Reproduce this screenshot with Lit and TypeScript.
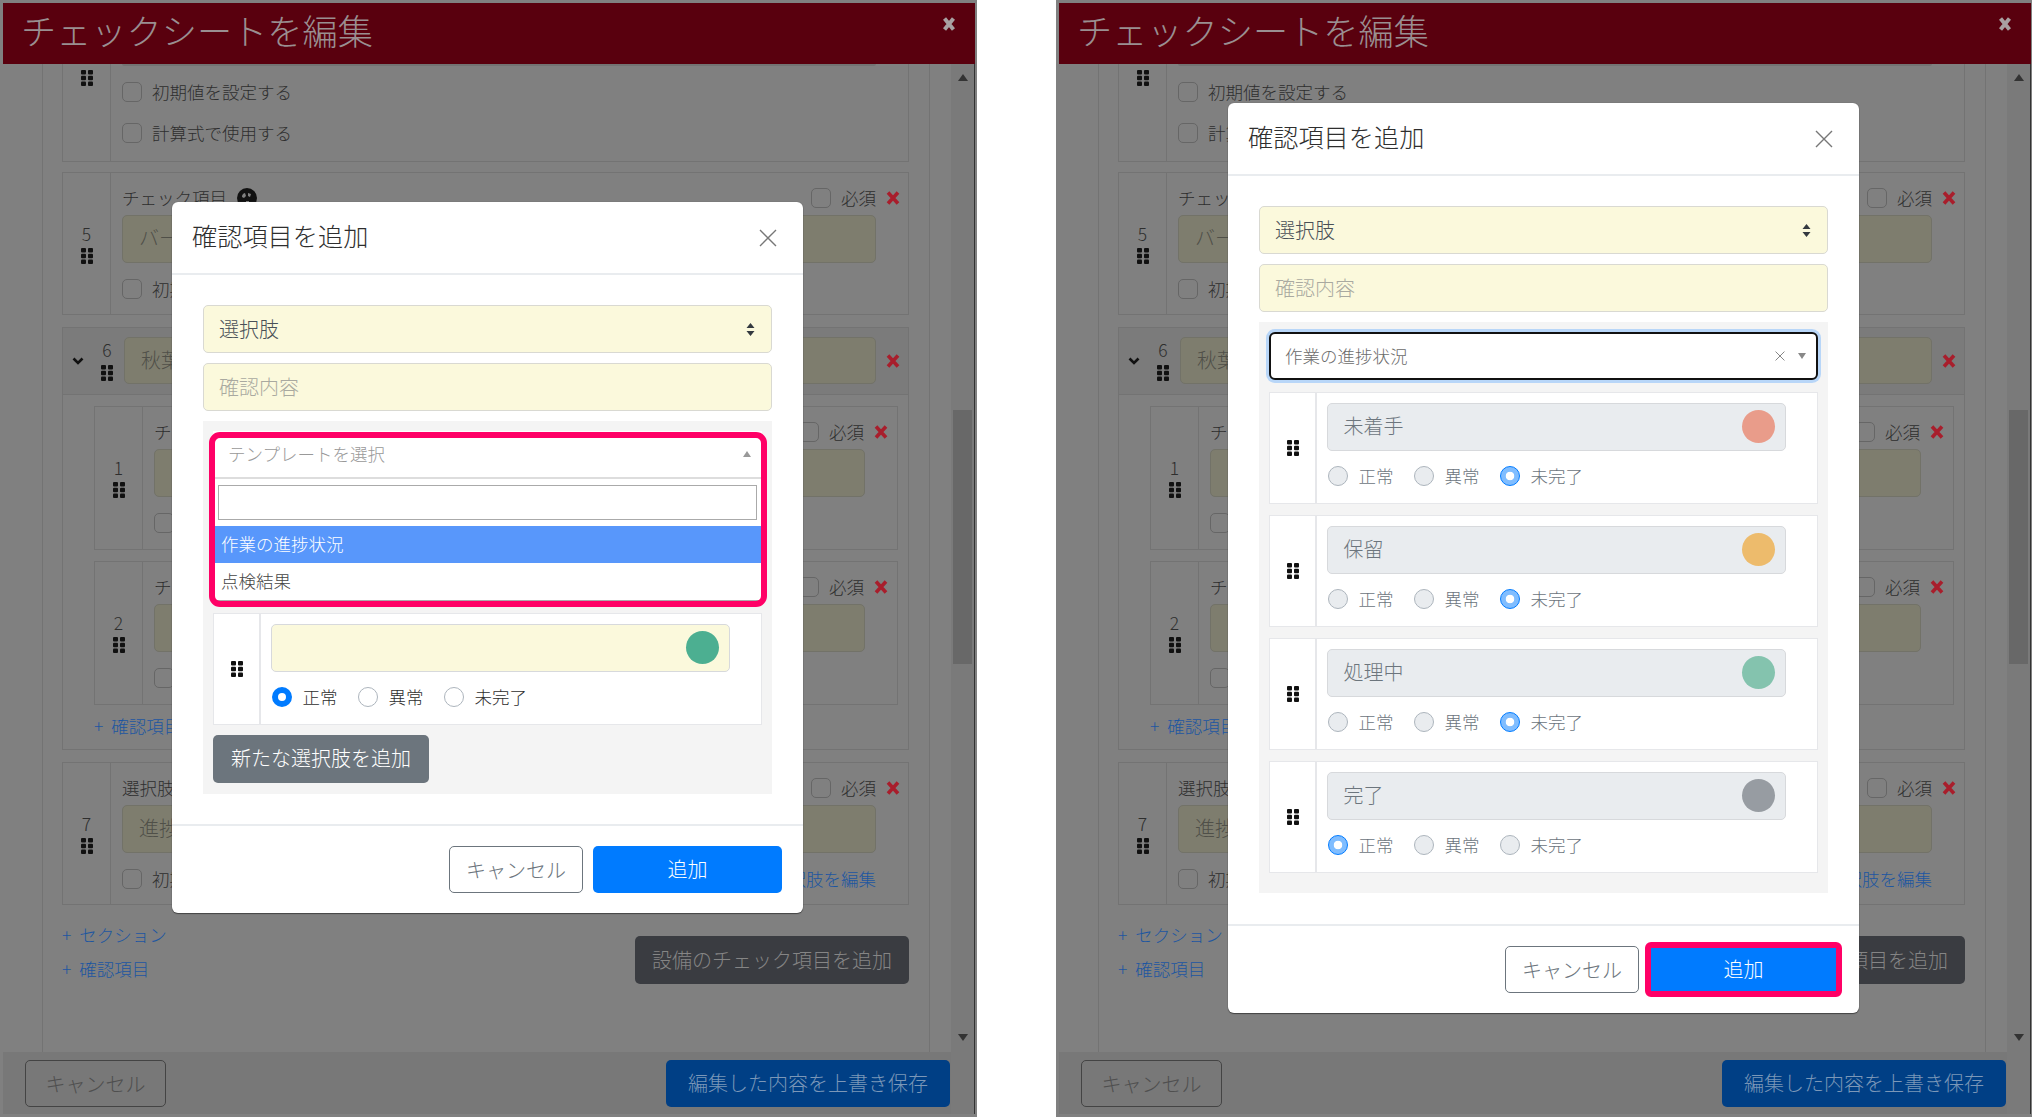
import { LitElement, html, css, nothing, svg } from "lit";
import { customElement } from "lit/decorators.js";

const grip = (cls = "grip") => html`<svg class=${cls} viewBox="0 0 12 16" width="12" height="16">
  ${[0, 1, 2].map((r) => [0, 1].map((c) => svg`<rect x=${c * 7} y=${r * 5.7} width="5" height="4.6" rx="1"></rect>`))}
</svg>`;
const redX = () => html`<svg class="xm" viewBox="0 0 14 14" width="14" height="14"><path d="M2 1.5 12 12.500M12 1.5 2 12.500"></path></svg>`;
const chk = () => html`<span class="chk"></span>`;
const thinX = (s: number, cls: string) => html`<svg class=${cls} viewBox="0 0 18 18" width=${s} height=${s}><path d="M1 1 17 17M17 1 1 17"></path></svg>`;

interface Choice { text: string; color: string; checked: number; disabled: boolean }

@customElement("app-root")
export class AppRoot extends LitElement {
  static styles = css`
    :host { display: block; width: 2032px; height: 1118px; background: #fff; overflow: hidden; font-family: "Noto Sans CJK JP", "Liberation Sans", sans-serif; font-size: 17.5px; font-weight: 300; color: #2e2e2e; }
    * { box-sizing: border-box; }
    .page { display: flex; gap: 79px; width: 2032px; height: 1118px; }
    .panel { position: relative; flex: none; width: 977px; height: 1117px; background: #808080; padding: 3px 0 3px 3px; display: flex; flex-direction: column; overflow: hidden; }
    .panel.second { width: 976px; }
    .hdr { flex: none; width: 972px; height: 61px; background: #59000e; color: #9a8f91; font-size: 35.2px; line-height: 54px; padding-left: 18px; position: relative; }
    .hdr svg { position: absolute; right: 20px; top: 14px; stroke: #a8a0a1; stroke-width: 4; fill: none; }
    .under { flex: 1; display: flex; min-height: 0; }
    .main { width: 948px; display: flex; flex-direction: column; }
    .track { width: 24px; background: #7a7a7a; border-right: 1px solid #333; display: flex; flex-direction: column; align-items: center; position: relative; }
    .thumb { position: absolute; top: 346px; left: 2px; width: 19px; height: 254px; background: #686868; }
    .tri-up { width: 0; height: 0; border: 5px solid transparent; border-top: 0; border-bottom: 7px solid #333; margin-top: 10px; }
    .tri-dn { width: 0; height: 0; border: 5px solid transparent; border-bottom: 0; border-top: 7px solid #333; position: absolute; top: 970px; }
    .scroll { height: 988px; overflow: hidden; }
    .content { margin-left: 39px; width: 888px; height: 988px; border-left: 1px solid #737373; border-right: 1px solid #737373; padding: 0 20px 0 19px; display: flex; flex-direction: column; }
    .row { flex: none; border: 1px solid #737373; display: flex; }
    .r0 { height: 98px; border-top: 0; }
    .mt10 { margin-top: 10px; }
    .mt12 { margin-top: 12px; }
    .handle { flex: none; width: 48px; border-right: 1px solid #737373; display: flex; flex-direction: column; align-items: center; justify-content: center; gap: 4px; line-height: 20px; color: #2e2e2e; }
    .r0 .handle { justify-content: flex-start; padding-top: 6px; }
    .grip { fill: #111; display: block; }
    .cell { flex: 1; min-width: 0; padding: 15px 32px 15px 11px; }
    .r0 .cell { padding: 0 32px 0 11px; }
    .stub { height: 2px; background: #737373; border-radius: 0 0 5px 5px; margin-bottom: 16px; }
    .head { display: flex; align-items: center; height: 20px; margin: 0 -24px 7px 0; gap: 10px; line-height: 20px; }
    .nest .head { margin-right: -23px; }
    .head .lbl { flex: 1; display: flex; align-items: center; gap: 10px; white-space: nowrap; }
    .q { flex: none; }
    .xm { stroke: #a81e2c; stroke-width: 3.6; fill: none; flex: none; }
    .chk { flex: none; width: 20px; height: 20px; border: 1.5px solid #666; border-radius: 5px; background: #808080; display: block; }
    .bginput { height: 48px; background: #7e7d6e; border: 1.5px solid #727268; border-radius: 5px; padding-left: 16px; font-size: 20px; line-height: 44px; color: #4f4f48; white-space: nowrap; overflow: hidden; }
    .check { display: flex; align-items: center; gap: 10px; height: 20px; line-height: 20px; margin-top: 16px; white-space: nowrap; }
    .check .link { margin-left: auto; }
    .r0 .check { margin-top: 0; margin-bottom: 21px; }
    .link { color: #1d56a0; white-space: nowrap; line-height: 20px; word-spacing: 4px; }
    .section { flex-direction: column; margin-top: 12px; height: 423px; }
    .sec-head { flex: none; display: flex; align-items: center; height: 67px; padding: 9px 8px 10px 9px; background: #7b7b7b; border-bottom: 1px solid #737373; }
    .chev { fill: none; stroke: #111; stroke-width: 2.6; flex: none; }
    .sec-num { flex: none; width: 20px; margin: 0 7px 0 13px; display: flex; flex-direction: column; align-items: center; gap: 5px; line-height: 20px; }
    .sec-head .bginput { flex: 1; margin-right: 10px; height: 47px; }
    .nest { padding: 11px 10px 0 31px; display: flex; flex-direction: column; }
    .nest .row { height: 144px; }
    .nest .row + .row { margin-top: 11px; }
    .nest .link { margin-top: 11px; }
    .actions { flex: none; display: flex; justify-content: space-between; margin-top: 21px; }
    .links { display: flex; flex-direction: column; gap: 14px; margin-top: -1px; }
    .dark-btn { margin-top: 10px; height: 48px; width: 274px; background: #3a3c41; color: #858585; border-radius: 5px; font-size: 20px; line-height: 47px; text-align: center; white-space: nowrap; }
    .foot { flex: 1; background: #787878; padding: 8px 0 0 22px; display: flex; justify-content: space-between; align-items: flex-start; }
    .foot span { height: 47px; font-size: 20px; line-height: 45px; border-radius: 5px; text-align: center; white-space: nowrap; }
    .f-cancel { width: 141px; border: 1.5px solid #444; color: #4f4f4f; }
    .f-save { width: 284px; background: #003f85; color: #7b97b8; margin-right: 1px; }

    .modal { position: absolute; left: 172px; width: 631px; background: #fff; border-radius: 6px; box-shadow: 0 1px 1px #444, 0 0 1px #555; display: flex; flex-direction: column; }
    .modal.low { top: 202px; height: 711px; }
    .modal.high { top: 103px; height: 910px; }
    .m-head { flex: none; height: 73px; border-bottom: 2px solid #e9ecef; display: flex; align-items: center; justify-content: space-between; padding: 0 26px 0 20px; font-size: 25.2px; color: #2e2e2e; }
    .m-head span { padding-bottom: 5px; }
    .m-close { stroke: #777; stroke-width: 1.4; fill: none; }
    .m-body { flex: 1; padding: 30px 31px; }
    .y-select { position: relative; height: 48px; background: #fbf9dc; border: 1.5px solid #d9d9d2; border-radius: 5px; padding-left: 15px; font-size: 20px; line-height: 45px; color: #495057; }
    .y-select svg { position: absolute; right: 16px; top: 17px; fill: #343a40; }
    .y-input { height: 48px; margin-top: 10px; background: #fbf9dc; border: 1.5px solid #d9d9d2; border-radius: 5px; padding-left: 15px; font-size: 20px; line-height: 45px; color: #a9a9a0; }
    .tray { margin-top: 10px; background: #f4f4f4; padding: 10px 10px 11px 10px; }
    .tray.full { padding-bottom: 20px; }
    .open { position: relative; height: 170px; background: #fff; display: flex; flex-direction: column; border-bottom: 1.5px solid #aaa; }
    .open-top { flex: none; height: 48px; border-bottom: 2px solid #ddd; padding: 0 11px 0 15px; line-height: 46px; color: #999; display: flex; align-items: center; justify-content: space-between; }
    .tri-sm-up { width: 0; height: 0; border: 4px solid transparent; border-top: 0; border-bottom: 6px solid #999; }
    .search { flex: none; padding: 6px 5px; height: 47px; }
    .search div { height: 35px; border: 1.5px solid #aaa; background: #fff; }
    .opt { flex: none; height: 37px; padding-left: 8px; line-height: 35px; color: #444; }
    .opt.sel { background: #5897fb; color: #fff; }
    .pink { position: absolute; pointer-events: none; border: 6px solid #ff0066; border-radius: 11px; }
    .open .pink { top: 1px; left: -4px; right: -5px; bottom: -7px; }
    .focus { height: 48px; background: #fff; border: 2px solid #111; border-radius: 6px; box-shadow: 0 0 0 3px #b8d6f8; padding: 0 10px 0 14px; display: flex; align-items: center; color: #6b6b6b; }
    .focus .t { flex: 1; padding-bottom: 2px; }
    .sx { stroke: #777; stroke-width: 1.6; fill: none; margin-right: 13px; }
    .tri-sm-dn { width: 0; height: 0; border: 4px solid transparent; border-bottom: 0; border-top: 6px solid #888; }
    .choice { display: flex; height: 112px; margin-top: 11px; background: #fff; border: 1.5px solid #e6e7ea; }
    .open + .choice, .focus + .choice { margin-top: 12px; }
    .c-handle { flex: none; width: 47px; border-right: 2px solid #e6e7ea; display: flex; align-items: center; justify-content: center; }
    .c-cell { flex: 1; padding: 9.5px 0 0 9.5px; }
    .c-input { width: 459px; height: 48px; border: 1.5px solid #d7d9dc; border-radius: 5px; background: #fbf9dc; display: flex; align-items: center; justify-content: space-between; padding: 0 10px 0 16px; font-size: 20px; color: #6c757d; }
    .c-input.dis { background: #e9ecef; }
    .c-input span:first-child { padding-bottom: 3px; }
    .dot { flex: none; width: 33px; height: 33px; border-radius: 50%; }
    .radios { display: flex; margin: 15px 0 0 1px; line-height: 20px; }
    .radio { display: flex; align-items: center; gap: 11px; margin-right: 20px; }
    .radio i { flex: none; display: block; width: 20px; height: 20px; border-radius: 50%; border: 1.5px solid #adb5bd; background: #fff; }
    .radios.dis { color: #6c757d; }
    .radios.dis .radio i { background: #e9ecef; }
    .radio i.on { background: #fff; border: 6px solid #007bff; }
    .radios.dis .radio i.on { border: 1.5px solid #007bff; background: radial-gradient(circle, #fff 0 4px, #80bdff 4.6px); }
    .add-opt { display: block; margin-top: 10px; width: 216px; height: 48px; border-radius: 5px; background: #6c757d; color: #fff; font-size: 20px; line-height: 46px; text-align: center; white-space: nowrap; }
    .m-foot { flex: none; height: 89px; border-top: 2px solid #e9ecef; padding: 20px 21px 0 0; display: flex; justify-content: flex-end; gap: 10px; }
    .m-foot span { position: relative; height: 47px; font-size: 20px; line-height: 45px; border-radius: 5px; text-align: center; white-space: nowrap; }
    .m-cancel { width: 134px; border: 1.5px solid #6c757d; color: #6c757d; background: #fff; }
    .m-add { width: 189px; background: #007bff; color: #fff; }
    .m-add .pink { inset: -4px -4px -4px -4px; border-radius: 6px; }
  `;

  private help() {
    return html`<svg class="q" viewBox="0 0 20 20" width="20" height="20"><circle cx="10" cy="10" r="10" fill="#111"></circle><path d="M5 9a4 4 0 0 1 3-4l1 3-2 2zM11 5l3 1-1 3-2-1zM9 13h3v4H9z" fill="#808080"></path></svg>`;
  }

  private bgRow(n: string, label: string, value: string, cls: string, extra: unknown = nothing, help = false) {
    return html`<div class="row ${cls}">
      <div class="handle"><span>${n}</span>${grip()}</div>
      <div class="cell">
        <div class="head"><span class="lbl">${label}${help ? this.help() : nothing}</span>${chk()}<span>必須</span>${redX()}</div>
        <div class="bginput">${value}</div>
        <div class="check">${chk()}<span>初期値を設定する</span>${extra}</div>
      </div>
    </div>`;
  }

  private background() {
    return html`
      <div class="hdr">チェックシートを編集<svg viewBox="0 0 12 14" width="12" height="14"><path d="M1.5 1.5 10.500 12.500M10.500 1.5 1.5 12.500"></path></svg></div>
      <div class="under">
        <div class="main">
          <div class="scroll"><div class="content">
            <div class="row r0">
              <div class="handle">${grip()}</div>
              <div class="cell">
                <div class="stub"></div>
                <div class="check">${chk()}<span>初期値を設定する</span></div>
                <div class="check">${chk()}<span>計算式で使用する</span></div>
              </div>
            </div>
            ${this.bgRow("5", "チェック項目", "バーコード", "mt10", nothing, true)}
            <div class="row section">
              <div class="sec-head">
                <svg class="chev" viewBox="0 0 12 8" width="12" height="8"><path d="M1.5 1.5 6 6l4.500-4.500"></path></svg>
                <div class="sec-num"><span>6</span>${grip()}</div>
                <div class="bginput">秋葉原</div>
                ${redX()}
              </div>
              <div class="nest">
                ${this.bgRow("1", "チェック項目", "", "")}
                ${this.bgRow("2", "チェック項目", "", "")}
                <span class="link">+ 確認項目</span>
              </div>
            </div>
            ${this.bgRow("7", "選択肢", "進捗状況", "mt12", html`<span class="link">選択肢を編集</span>`)}
            <div class="actions">
              <div class="links"><span class="link">+ セクション</span><span class="link">+ 確認項目</span></div>
              <span class="dark-btn">設備のチェック項目を追加</span>
            </div>
          </div></div>
          <div class="foot"><span class="f-cancel">キャンセル</span><span class="f-save">編集した内容を上書き保存</span></div>
        </div>
        <div class="track"><div class="tri-up"></div><div class="thumb"></div><div class="tri-dn"></div></div>
      </div>`;
  }

  private choice(c: Choice) {
    return html`<div class="choice">
      <div class="c-handle">${grip()}</div>
      <div class="c-cell">
        <div class="c-input ${c.disabled ? "dis" : ""}"><span>${c.text}</span><span class="dot" style="background:${c.color}"></span></div>
        <div class="radios ${c.disabled ? "dis" : ""}">
          ${["正常", "異常", "未完了"].map((t, i) => html`<span class="radio"><i class=${c.checked === i ? "on" : ""}></i>${t}</span>`)}
        </div>
      </div>
    </div>`;
  }

  private modalTop() {
    return html`<div class="m-head"><span>確認項目を追加</span>${thinX(18, "m-close")}</div>`;
  }

  private fields() {
    return html`
      <div class="y-select">選択肢<svg viewBox="0 0 9 13" width="9" height="13"><path d="M4.500 0 8.500 5H.5zM4.500 13 .5 8h8z"></path></svg></div>
      <div class="y-input">確認内容</div>`;
  }

  private modalFoot(mark: boolean) {
    return html`<div class="m-foot"><span class="m-cancel">キャンセル</span><span class="m-add">追加${mark ? html`<div class="pink"></div>` : nothing}</span></div>`;
  }

  render() {
    const rows: Choice[] = [
      { text: "未着手", color: "#e99c8a", checked: 2, disabled: true },
      { text: "保留", color: "#edbb6c", checked: 2, disabled: true },
      { text: "処理中", color: "#84c3ae", checked: 2, disabled: true },
      { text: "完了", color: "#979ca2", checked: 0, disabled: true },
    ];
    return html`<div class="page">
      <section class="panel">
        ${this.background()}
        <div class="modal low">
          ${this.modalTop()}
          <div class="m-body">
            ${this.fields()}
            <div class="tray">
              <div class="open">
                <div class="open-top"><span>テンプレートを選択</span><div class="tri-sm-up"></div></div>
                <div class="search"><div></div></div>
                <div class="opt sel">作業の進捗状況</div>
                <div class="opt">点検結果</div>
                <div class="pink"></div>
              </div>
              ${this.choice({ text: "", color: "#4caf91", checked: 0, disabled: false })}
              <span class="add-opt">新たな選択肢を追加</span>
            </div>
          </div>
          ${this.modalFoot(false)}
        </div>
      </section>
      <section class="panel second">
        ${this.background()}
        <div class="modal high">
          ${this.modalTop()}
          <div class="m-body">
            ${this.fields()}
            <div class="tray full">
              <div class="focus"><span class="t">作業の進捗状況</span>${thinX(10, "sx")}<div class="tri-sm-dn"></div></div>
              ${rows.map((r) => this.choice(r))}
            </div>
          </div>
          ${this.modalFoot(true)}
        </div>
      </section>
    </div>`;
  }
}
